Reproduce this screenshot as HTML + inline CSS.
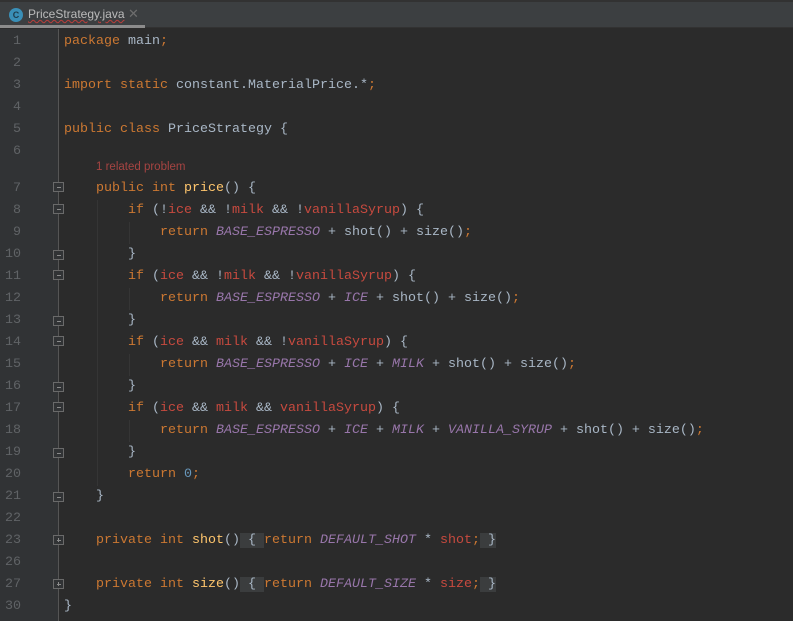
<!DOCTYPE html>
<html><head><style>
*{margin:0;padding:0;box-sizing:border-box}
body{width:793px;height:621px;background:#2b2b2b;overflow:hidden;position:relative;font-family:"Liberation Mono",monospace;font-size:13.33px}
#tabs{position:absolute;left:0;top:0;width:793px;height:28px;background:#3c3f41;border-top:2px solid #323232;border-bottom:1px solid #323232}
#tab{position:absolute;left:0;top:0;width:145px;height:26px;border-bottom:3px solid #8c8c8c}
#icon{position:absolute;left:9px;top:6px;width:14px;height:14px;border-radius:50%;background:#3a8fb7;color:#1d3c4c;font:bold 9px "Liberation Sans",sans-serif;text-align:center;line-height:14px}
#tname{position:absolute;left:28px;top:5px;font:12px "Liberation Sans",sans-serif;color:#bbbbbb;text-decoration:underline wavy #bc3f3c;text-decoration-thickness:1px}
#x{position:absolute;left:128px;top:4px;color:#6e6e6e;font:13px "Liberation Sans",sans-serif}
#gutter{position:absolute;left:0;top:29px;width:58px;height:592px;background:#313335}
#gl{position:absolute;left:58px;top:29px;width:1px;height:592px;background:#555555}
.n{position:absolute;left:0;width:21px;text-align:right;color:#606366;height:22px;line-height:22px}
.l{position:absolute;left:64px;height:22px;line-height:22px;white-space:pre;color:#a9b7c6}
.k{color:#cc7832}.m{color:#ffc66d}.f{color:#c74a3f}.c{color:#9876aa;font-style:italic}.num{color:#6897bb}
.fb{background:#3b3d3e}
.g{position:absolute;width:1px;background:#353535}
.fold{position:absolute;left:53px;width:11px;height:10px;border:1px solid #6a6a6a;background:#313335}
.fold:after{content:"";position:absolute;left:2.5px;top:3.5px;width:4px;height:1px;background:#8a8a8a}
.plus:before{content:"";position:absolute;left:4px;top:2px;width:1px;height:4px;background:#8a8a8a}
#prob{position:absolute;left:96px;top:161px;font:11.5px "Liberation Sans",sans-serif;color:#a64442}
</style></head><body>
<div id="tabs"><div id="tab"><div id="icon">C</div><div id="tname">PriceStrategy.java</div><div id="x">✕</div></div></div>
<div id="gutter"></div><div id="gl"></div>
<div class="g" style="left:97px;top:200px;height:286px"></div>
<div class="g" style="left:129px;top:222px;height:22px"></div>
<div class="g" style="left:129px;top:288px;height:22px"></div>
<div class="g" style="left:129px;top:354px;height:22px"></div>
<div class="g" style="left:129px;top:420px;height:22px"></div>

<div class="n" style="top:31px">1</div>
<div class="n" style="top:53px">2</div>
<div class="n" style="top:75px">3</div>
<div class="n" style="top:97px">4</div>
<div class="n" style="top:119px">5</div>
<div class="n" style="top:141px">6</div>
<div class="n" style="top:178px">7</div>
<div class="n" style="top:200px">8</div>
<div class="n" style="top:222px">9</div>
<div class="n" style="top:244px">10</div>
<div class="n" style="top:266px">11</div>
<div class="n" style="top:288px">12</div>
<div class="n" style="top:310px">13</div>
<div class="n" style="top:332px">14</div>
<div class="n" style="top:354px">15</div>
<div class="n" style="top:376px">16</div>
<div class="n" style="top:398px">17</div>
<div class="n" style="top:420px">18</div>
<div class="n" style="top:442px">19</div>
<div class="n" style="top:464px">20</div>
<div class="n" style="top:486px">21</div>
<div class="n" style="top:508px">22</div>
<div class="n" style="top:530px">23</div>
<div class="n" style="top:552px">26</div>
<div class="n" style="top:574px">27</div>
<div class="n" style="top:596px">30</div>

<div class="fold" style="top:182px"></div>
<div class="fold" style="top:204px"></div>
<div class="fold" style="top:250px"></div>
<div class="fold" style="top:270px"></div>
<div class="fold" style="top:316px"></div>
<div class="fold" style="top:336px"></div>
<div class="fold" style="top:382px"></div>
<div class="fold" style="top:402px"></div>
<div class="fold" style="top:448px"></div>
<div class="fold" style="top:492px"></div>
<div class="fold plus" style="top:535px"></div>
<div class="fold plus" style="top:579px"></div>

<div class="l" style="top:31px"><span class="k">package</span> main<span class="k">;</span></div>
<div class="l" style="top:75px"><span class="k">import static</span> constant.MaterialPrice.*<span class="k">;</span></div>
<div class="l" style="top:119px"><span class="k">public class</span> PriceStrategy {</div>
<div id="prob">1 related problem</div>
<div class="l" style="top:178px">    <span class="k">public int</span> <span class="m">price</span>() {</div>
<div class="l" style="top:200px">        <span class="k">if</span> (!<span class="f">ice</span> &amp;&amp; !<span class="f">milk</span> &amp;&amp; !<span class="f">vanillaSyrup</span>) {</div>
<div class="l" style="top:222px">            <span class="k">return</span> <span class="c">BASE_ESPRESSO</span> + shot() + size()<span class="k">;</span></div>
<div class="l" style="top:244px">        }</div>
<div class="l" style="top:266px">        <span class="k">if</span> (<span class="f">ice</span> &amp;&amp; !<span class="f">milk</span> &amp;&amp; !<span class="f">vanillaSyrup</span>) {</div>
<div class="l" style="top:288px">            <span class="k">return</span> <span class="c">BASE_ESPRESSO</span> + <span class="c">ICE</span> + shot() + size()<span class="k">;</span></div>
<div class="l" style="top:310px">        }</div>
<div class="l" style="top:332px">        <span class="k">if</span> (<span class="f">ice</span> &amp;&amp; <span class="f">milk</span> &amp;&amp; !<span class="f">vanillaSyrup</span>) {</div>
<div class="l" style="top:354px">            <span class="k">return</span> <span class="c">BASE_ESPRESSO</span> + <span class="c">ICE</span> + <span class="c">MILK</span> + shot() + size()<span class="k">;</span></div>
<div class="l" style="top:376px">        }</div>
<div class="l" style="top:398px">        <span class="k">if</span> (<span class="f">ice</span> &amp;&amp; <span class="f">milk</span> &amp;&amp; <span class="f">vanillaSyrup</span>) {</div>
<div class="l" style="top:420px">            <span class="k">return</span> <span class="c">BASE_ESPRESSO</span> + <span class="c">ICE</span> + <span class="c">MILK</span> + <span class="c">VANILLA_SYRUP</span> + shot() + size()<span class="k">;</span></div>
<div class="l" style="top:442px">        }</div>
<div class="l" style="top:464px">        <span class="k">return</span> <span class="num">0</span><span class="k">;</span></div>
<div class="l" style="top:486px">    }</div>
<div class="l" style="top:530px">    <span class="k">private int</span> <span class="m">shot</span>()<span class="fb"> { </span><span class="k">return</span> <span class="c">DEFAULT_SHOT</span> * <span class="f">shot</span><span class="k">;</span><span class="fb"> }</span></div>
<div class="l" style="top:574px">    <span class="k">private int</span> <span class="m">size</span>()<span class="fb"> { </span><span class="k">return</span> <span class="c">DEFAULT_SIZE</span> * <span class="f">size</span><span class="k">;</span><span class="fb"> }</span></div>
<div class="l" style="top:596px">}</div>
</body></html>
